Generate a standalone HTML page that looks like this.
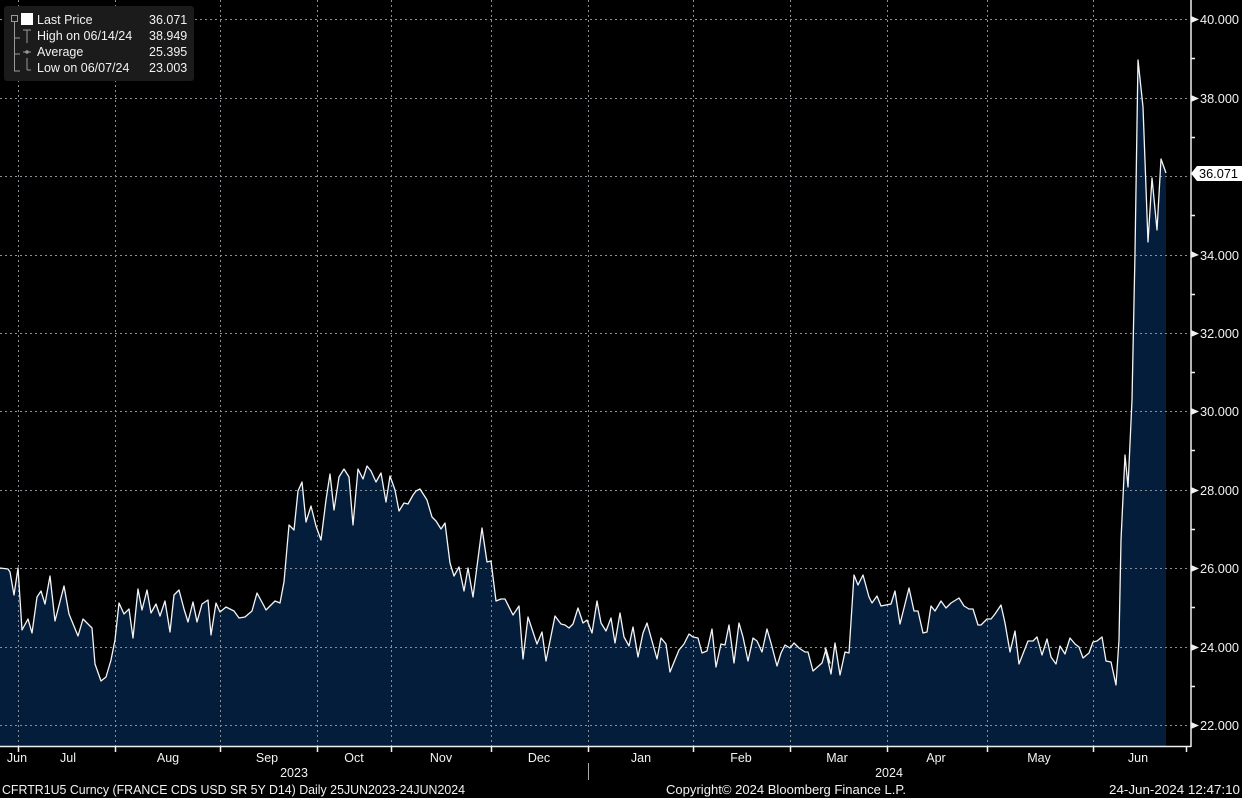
<!DOCTYPE html>
<html><head><meta charset="utf-8"><style>
html,body{margin:0;padding:0;background:#000;}
svg{display:block;}
text{font-family:"Liberation Sans",sans-serif;fill:#f2f2f2;}
</style></head><body>
<svg width="1242" height="798" viewBox="0 0 1242 798" xmlns="http://www.w3.org/2000/svg">
<rect width="1242" height="798" fill="#000"/>
<polygon fill="#041d3a" points="0,746 0,568 8,569 10,572 14,595 18,568 22,630 28,619 32,633 37,597 41,591 45,604 50,576 55,621 64,586 69,614 78,636 83,619 92,628 95,664 101,681 106,677 111,660 115,640 119,603 124,614 129,609 133,638 138,589 142,610 147,590 151,613 156,604 160,616 165,601 170,632 174,595 179,590 184,609 188,622 193,602 197,622 202,604 208,600 211,635 216,603 220,612 226,607 234,611 239,618 245,617 252,611 257,593 264,606 266,610 275,601 280,603 284,582 289,525 294,530 298,491 302,482 306,522 311,506 316,526 321,540 326,500 330,474 334,510 339,477 344,469 349,477 353,525 358,469 363,479 367,466 371,471 376,482 381,473 386,502 390,476 395,490 399,511 404,503 408,504 413,495 416,491 420,489 427,500 432,517 436,521 441,529 445,523 450,563 454,576 459,567 464,591 468,568 473,597 482,528 487,562 491,561 496,601 501,599 505,599 513,615 519,606 523,659 528,617 537,644 542,632 546,661 555,616 561,624 565,625 569,628 573,624 578,608 583,623 587,620 592,633 597,601 601,623 606,631 611,618 615,643 620,613 624,637 629,646 633,627 638,657 643,633 647,623 657,659 661,638 666,644 670,672 679,650 684,644 689,634 693,637 698,638 702,653 707,651 712,629 716,667 721,644 725,645 729,625 734,663 739,623 743,637 748,661 753,638 757,641 762,652 767,629 771,643 777,666 781,653 785,645 790,648 794,643 799,648 805,652 808,652 813,671 822,663 826,649 830,663 825,648 831,674 835,643 840,675 845,652 849,653 854,575 858,585 863,575 869,597 872,603 877,596 881,606 891,604 895,591 900,624 909,588 914,611 918,611 923,633 927,632 931,606 935,611 941,601 946,608 951,603 959,598 964,606 969,609 973,609 978,625 981,625 987,619 991,619 995,614 1001,605 1005,623 1010,652 1015,631 1019,664 1028,641 1033,641 1037,637 1042,655 1047,639 1051,657 1056,664 1060,646 1065,654 1070,638 1075,644 1079,647 1083,658 1089,653 1093,642 1097,641 1102,637 1106,661 1111,662 1116,685 1119,640 1121,540 1125,455 1128,487 1132,400 1135,253 1138,60 1143,107 1148,242 1152,178 1157,230 1161,159 1166,173 1166,746"/>
<g stroke="#8a8f96" stroke-width="1" stroke-dasharray="2,3" fill="none">
<path d="M0,19.5H1190M0,98.5H1190M0,176.5H1190M0,255.5H1190M0,333.5H1190M0,411.5H1190M0,490.5H1190M0,568.5H1190M0,647.5H1190M0,725.5H1190"/>
<path d="M18.5,0V746M115.5,0V746M220.5,0V746M317.5,0V746M391.5,0V746M491.5,0V746M588.5,0V746M693.5,0V746M790.5,0V746M887.5,0V746M987.5,0V746M1093.5,0V746"/>
</g>
<polyline fill="none" stroke="#f4f4f4" stroke-width="1.3" stroke-linejoin="round" points="0,568 8,569 10,572 14,595 18,568 22,630 28,619 32,633 37,597 41,591 45,604 50,576 55,621 64,586 69,614 78,636 83,619 92,628 95,664 101,681 106,677 111,660 115,640 119,603 124,614 129,609 133,638 138,589 142,610 147,590 151,613 156,604 160,616 165,601 170,632 174,595 179,590 184,609 188,622 193,602 197,622 202,604 208,600 211,635 216,603 220,612 226,607 234,611 239,618 245,617 252,611 257,593 264,606 266,610 275,601 280,603 284,582 289,525 294,530 298,491 302,482 306,522 311,506 316,526 321,540 326,500 330,474 334,510 339,477 344,469 349,477 353,525 358,469 363,479 367,466 371,471 376,482 381,473 386,502 390,476 395,490 399,511 404,503 408,504 413,495 416,491 420,489 427,500 432,517 436,521 441,529 445,523 450,563 454,576 459,567 464,591 468,568 473,597 482,528 487,562 491,561 496,601 501,599 505,599 513,615 519,606 523,659 528,617 537,644 542,632 546,661 555,616 561,624 565,625 569,628 573,624 578,608 583,623 587,620 592,633 597,601 601,623 606,631 611,618 615,643 620,613 624,637 629,646 633,627 638,657 643,633 647,623 657,659 661,638 666,644 670,672 679,650 684,644 689,634 693,637 698,638 702,653 707,651 712,629 716,667 721,644 725,645 729,625 734,663 739,623 743,637 748,661 753,638 757,641 762,652 767,629 771,643 777,666 781,653 785,645 790,648 794,643 799,648 805,652 808,652 813,671 822,663 826,649 830,663 825,648 831,674 835,643 840,675 845,652 849,653 854,575 858,585 863,575 869,597 872,603 877,596 881,606 891,604 895,591 900,624 909,588 914,611 918,611 923,633 927,632 931,606 935,611 941,601 946,608 951,603 959,598 964,606 969,609 973,609 978,625 981,625 987,619 991,619 995,614 1001,605 1005,623 1010,652 1015,631 1019,664 1028,641 1033,641 1037,637 1042,655 1047,639 1051,657 1056,664 1060,646 1065,654 1070,638 1075,644 1079,647 1083,658 1089,653 1093,642 1097,641 1102,637 1106,661 1111,662 1116,685 1119,640 1121,540 1125,455 1128,487 1132,400 1135,253 1138,60 1143,107 1148,242 1152,178 1157,230 1161,159 1166,173"/>
<!-- axes -->
<g stroke="#f0f0f0" stroke-width="1.5" fill="none">
<path d="M0,746.5H1191M1191,0V747"/>
<path d="M18.5,746V752M115.5,746V752M220.5,746V752M317.5,746V752M391.5,746V752M491.5,746V752M588.5,746V752M693.5,746V752M790.5,746V752M887.5,746V752M987.5,746V752M1093.5,746V752M1186.5,746V752"/>
<path d="M1191,58.5H1195M1191,137.5H1195M1191,215.5H1195M1191,294.5H1195M1191,372.5H1195M1191,450.5H1195M1191,529.5H1195M1191,607.5H1195M1191,686.5H1195"/>
<path d="M588.5,763V780" stroke="#aaa" stroke-width="1"/>
</g>
<g fill="#f0f0f0">
<polygon points="1191,16 1199,19.5 1191,23"/><polygon points="1191,95 1199,98.5 1191,102"/><polygon points="1191,251 1199,255 1191,258"/><polygon points="1191,330 1199,333.5 1191,337"/><polygon points="1191,408 1199,411.5 1191,415"/><polygon points="1191,487 1199,490.5 1191,494"/><polygon points="1191,565 1199,568.5 1191,572"/><polygon points="1191,644 1199,647.5 1191,651"/><polygon points="1191,722 1199,725.5 1191,729"/>
</g>
<g font-size="12.5">
<text x="1200" y="24" textLength="39" lengthAdjust="spacingAndGlyphs">40.000</text>
<text x="1200" y="103" textLength="39" lengthAdjust="spacingAndGlyphs">38.000</text>
<text x="1200" y="260" textLength="39" lengthAdjust="spacingAndGlyphs">34.000</text>
<text x="1200" y="338" textLength="39" lengthAdjust="spacingAndGlyphs">32.000</text>
<text x="1200" y="416" textLength="39" lengthAdjust="spacingAndGlyphs">30.000</text>
<text x="1200" y="495" textLength="39" lengthAdjust="spacingAndGlyphs">28.000</text>
<text x="1200" y="573" textLength="39" lengthAdjust="spacingAndGlyphs">26.000</text>
<text x="1200" y="652" textLength="39" lengthAdjust="spacingAndGlyphs">24.000</text>
<text x="1200" y="730" textLength="39" lengthAdjust="spacingAndGlyphs">22.000</text>
</g>
<polygon points="1191,173.5 1197,166 1242,166 1242,181 1197,181" fill="#fff"/>
<text x="1199" y="178" font-size="12.5" style="fill:#000" textLength="39" lengthAdjust="spacingAndGlyphs">36.071</text>
<!-- legend -->
<rect x="4" y="6" width="190" height="75" rx="3" fill="#1b1b1b"/>
<g stroke="#999" stroke-width="1" fill="none">
<rect x="11.5" y="15.5" width="6" height="6"/>
<path d="M14.5,22V71H20M14.5,38H20M14.5,54H20M14.5,71H20"/>
<path d="M23,30H31M27,30V43M23,52H31M27,70H31M27,58V70"/>
</g>
<circle cx="27" cy="52" r="1.8" fill="#999"/>
<rect x="21" y="13" width="12" height="12" fill="#fff"/>
<g font-size="12.5">
<text x="37" y="24">Last Price</text><text x="149" y="24">36.071</text>
<text x="37" y="40">High on 06/14/24</text><text x="149" y="40">38.949</text>
<text x="37" y="56">Average</text><text x="149" y="56">25.395</text>
<text x="37" y="72">Low on 06/07/24</text><text x="149" y="72">23.003</text>
</g>
<g font-size="12.5" text-anchor="middle">
<text x="17" y="762">Jun</text><text x="68" y="762">Jul</text><text x="168" y="762">Aug</text><text x="267" y="762">Sep</text><text x="354" y="762">Oct</text><text x="441" y="762">Nov</text><text x="539" y="762">Dec</text><text x="641" y="762">Jan</text><text x="741" y="762">Feb</text><text x="837" y="762">Mar</text><text x="936" y="762">Apr</text><text x="1039" y="762">May</text><text x="1138" y="762">Jun</text>
<text x="294" y="777">2023</text><text x="889" y="777">2024</text>
</g>
<g font-size="12.5">
<text x="2" y="794" textLength="463" lengthAdjust="spacingAndGlyphs">CFRTR1U5 Curncy (FRANCE CDS USD SR 5Y D14)  Daily 25JUN2023-24JUN2024</text>
<text x="666" y="794" textLength="240" lengthAdjust="spacingAndGlyphs">Copyright© 2024 Bloomberg Finance L.P.</text>
<text x="1109" y="794" textLength="131" lengthAdjust="spacingAndGlyphs">24-Jun-2024 12:47:10</text>
</g>
</svg>
</body></html>
